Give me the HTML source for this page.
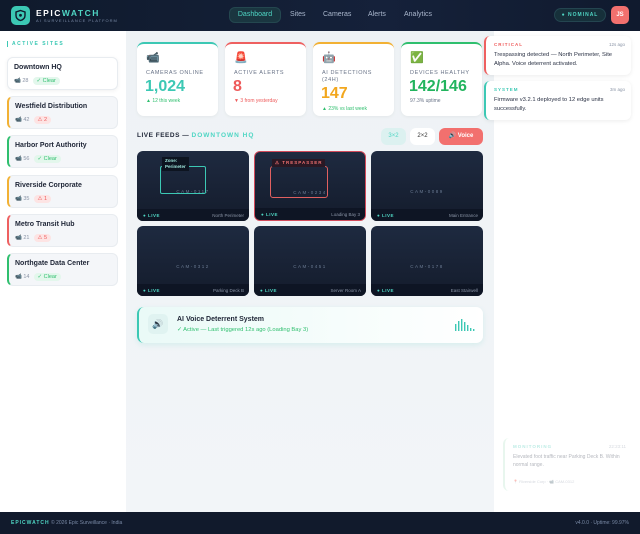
<!DOCTYPE html>
<html><head><meta charset="utf-8"><style>
*{box-sizing:border-box;margin:0;padding:0}
body{width:640px;height:534px;overflow:hidden;font-family:"Liberation Sans",sans-serif;background:#fff;position:relative;color:#1e2536}
.hdr{position:absolute;left:0;top:0;width:640px;height:31px;background:linear-gradient(90deg,#0f1a2c,#15213a 60%,#101a2e);}
.logo{position:absolute;left:11px;top:6px;width:19px;height:19px;border-radius:5px;background:#3cc8b4}
.brand{position:absolute;left:36px;top:8px;font-size:8.5px;font-weight:bold;letter-spacing:1.5px;color:#fff}
.brand b{color:#4fd6c4}
.sub{position:absolute;left:36px;top:18px;font-size:4px;letter-spacing:1px;color:#7a8aa6}
.nav{position:absolute;top:11px;font-size:7px;color:#a9b6cc}
.navact{position:absolute;left:229px;top:7px;width:52px;height:16px;border-radius:6px;background:#1a3640;border:1px solid #24474f;color:#4fd6c4;font-size:7px;text-align:center;line-height:14px}
.nom{position:absolute;left:554px;top:8px;width:52px;height:14px;border-radius:7px;background:#16303a;border:1px solid #244550;color:#4fd6c4;font-size:5px;font-weight:bold;letter-spacing:1px;line-height:12px;text-align:center}
.av{position:absolute;left:611px;top:6px;width:18px;height:18px;border-radius:5px;background:#f2706e;color:#fff;font-size:6px;font-weight:bold;text-align:center;line-height:18px}
.side{position:absolute;left:0;top:31px;width:126px;height:481px;background:#fff}
.main{position:absolute;left:126px;top:31px;width:368px;height:481px;background:linear-gradient(180deg,#eef2f5,#f2f5f8)}
.right{position:absolute;left:494px;top:31px;width:146px;height:481px;background:#fff}
.st{position:absolute;left:7px;top:41px;font-size:5px;font-weight:bold;letter-spacing:1.5px;color:#3cc8b4;border-left:1px solid #3cc8b4;padding-left:4px}
.sc{position:absolute;left:7px;width:111px;height:33px;border-radius:6px;background:#f4f6f9;border:1px solid #e8ecf0;border-left:2px solid}
.sc .n{position:absolute;left:6px;top:6px;font-size:7px;font-weight:bold;color:#1e2536}
.sc .m{position:absolute;left:6px;top:19px;font-size:5.5px;color:#8a94a6}
.pill{display:inline-block;margin-left:4px;padding:1px 4px;border-radius:5px;font-size:5.5px}
.g{background:#e3f7ec;color:#2fbf6e}.r{background:#fde4e4;color:#ee5a5a}
.card{position:absolute;top:42px;width:81px;height:74px;background:#fff;border-radius:7px;border-top:2px solid;box-shadow:0 1px 3px rgba(0,0,0,.05)}
.card .ic{position:absolute;left:9px;top:7px;font-size:11px}
.card .l{position:absolute;left:9px;top:26px;font-size:5.5px;letter-spacing:.6px;color:#6a7488;line-height:7px}
.card .v{position:absolute;left:8px;font-size:16px;font-weight:bold}
.card .d{position:absolute;left:9px;font-size:5px}
.cam{position:absolute;width:112px;height:70px;border-radius:6px;background:linear-gradient(180deg,#1e2a40,#141c2c);overflow:hidden}
.cam .bar{position:absolute;left:0;bottom:0;width:100%;height:12px;background:#0e1524}
.cam .lv{position:absolute;left:6px;bottom:3px;font-size:4.5px;font-weight:bold;color:#4fd6c4;letter-spacing:.5px}
.cam .loc{position:absolute;right:5px;bottom:3px;font-size:4.5px;color:#8a94a6}
.cam .id{position:absolute;left:0;width:100%;text-align:center;top:38px;font-size:4.5px;letter-spacing:1.5px;color:#6a7a92}
.btn{position:absolute;top:128px;height:17px;border-radius:6px;font-size:6px;text-align:center;line-height:17px}
.toast{position:absolute;left:484px;width:147px;background:#fff;border-radius:6px;border-left:2px solid;box-shadow:0 1px 4px rgba(0,0,0,.08)}
.toast .t{position:absolute;left:8px;top:6px;font-size:4.5px;font-weight:bold;letter-spacing:1px}
.toast .tm{position:absolute;right:6px;top:6px;font-size:4.5px;color:#8a94a6}
.toast .b{position:absolute;left:8px;top:15px;width:132px;font-size:5.8px;line-height:9px;color:#2a3144}
.ftr{position:absolute;left:0;top:512px;width:640px;height:22px;background:#111a2c;font-size:5px;color:#7a8aa6}
</style></head><body>
<div class="hdr">
<div class="logo"><svg width="19" height="19" viewBox="0 0 19 19"><path d="M9.5 4.5 L14 6 V9.5 C14 12 12 13.8 9.5 14.5 C7 13.8 5 12 5 9.5 V6 Z" fill="none" stroke="#0f1a2c" stroke-width="1.4"/><circle cx="9.5" cy="9.3" r="1.4" fill="#0f1a2c"/></svg></div>
<div class="brand">EPIC<b>WATCH</b></div>
<div class="sub">AI SURVEILLANCE PLATFORM</div>
<div class="navact">Dashboard</div>
<div class="nav" style="left:290px">Sites</div>
<div class="nav" style="left:323px">Cameras</div>
<div class="nav" style="left:368px">Alerts</div>
<div class="nav" style="left:404px">Analytics</div>
<div class="nom">● NOMINAL</div>
<div class="av">JS</div>
</div>
<div class="side"></div><div class="main"></div><div class="right"></div>
<div class="st">ACTIVE SITES</div>
<div class="sc" style="top:57px;background:#fff;border-left:1px solid #e8ecf0;box-shadow:0 1px 4px rgba(0,0,0,.06)"><div class="n">Downtown HQ</div><div class="m">📹 28<span class="pill g">✓ Clear</span></div></div>
<div class="sc" style="top:96px;border-left-color:#f2b134"><div class="n">Westfield Distribution</div><div class="m">📹 42<span class="pill r">⚠ 2</span></div></div>
<div class="sc" style="top:135px;border-left-color:#2fbf6e"><div class="n">Harbor Port Authority</div><div class="m">📹 56<span class="pill g">✓ Clear</span></div></div>
<div class="sc" style="top:175px;border-left-color:#f2b134"><div class="n">Riverside Corporate</div><div class="m">📹 35<span class="pill r">⚠ 1</span></div></div>
<div class="sc" style="top:214px;border-left-color:#ee6060"><div class="n">Metro Transit Hub</div><div class="m">📹 21<span class="pill r">⚠ 5</span></div></div>
<div class="sc" style="top:253px;border-left-color:#2fbf6e"><div class="n">Northgate Data Center</div><div class="m">📹 14<span class="pill g">✓ Clear</span></div></div>

<div class="card" style="left:137px;border-top-color:#3cc8b4"><div class="ic">📹</div><div class="l">CAMERAS ONLINE</div><div class="v" style="top:34px;color:#3cc8b4">1,024</div><div class="d" style="top:54px;color:#2fbf6e">▲ 12 this week</div></div>
<div class="card" style="left:225px;border-top-color:#ee6060"><div class="ic">🚨</div><div class="l">ACTIVE ALERTS</div><div class="v" style="top:34px;color:#ee5a5a">8</div><div class="d" style="top:54px;color:#ee5a5a">▼ 3 from yesterday</div></div>
<div class="card" style="left:313px;border-top-color:#f2b134"><div class="ic">🤖</div><div class="l">AI DETECTIONS<br>(24H)</div><div class="v" style="top:41px;color:#f2a71e">147</div><div class="d" style="top:62px;color:#2fbf6e">▲ 23% vs last week</div></div>
<div class="card" style="left:401px;border-top-color:#2fbf6e"><div class="ic">✅</div><div class="l">DEVICES HEALTHY</div><div class="v" style="top:34px;color:#22b45e">142/146</div><div class="d" style="top:54px;color:#6a7488">97.3% uptime</div></div>

<div style="position:absolute;left:137px;top:132px;font-size:6.5px;font-weight:bold;letter-spacing:.5px">LIVE FEEDS — <span style="color:#4fd6c4;letter-spacing:1px">DOWNTOWN HQ</span></div>
<div class="btn" style="left:381px;width:25px;background:#dcf1f0;color:#4fd6c4">3×2</div>
<div class="btn" style="left:410px;width:25px;background:#fff;color:#333">2×2</div>
<div class="btn" style="left:439px;width:44px;background:#f2706e;color:#fff;font-weight:bold">🔊 Voice</div>

<div class="cam" style="left:137px;top:151px"><div style="position:absolute;left:23px;top:15px;width:46px;height:28px;border:1px solid #3cc8b4;border-radius:2px"></div><div style="position:absolute;left:25px;top:6px;background:#0d1420;color:#9fe6dc;font-size:4.5px;font-weight:bold;padding:1px 3px;line-height:6px">Zone:<br>Perimeter</div><div class="id">CAM-0117</div><div class="bar"></div><div class="lv">● LIVE</div><div class="loc">North Perimeter</div></div>
<div class="cam" style="left:254px;top:151px;border:1px solid #d24a5a"><div style="position:absolute;left:15px;top:14px;width:58px;height:32px;border:1px solid #e06060;border-radius:3px"></div><div style="position:absolute;left:17px;top:7px;background:#2a1824;color:#f07070;font-size:4.5px;font-weight:bold;padding:1px 3px;letter-spacing:1px">⚠ TRESPASSER</div><div class="id">CAM-0234</div><div class="bar"></div><div class="lv">● LIVE</div><div class="loc">Loading Bay 3</div></div>
<div class="cam" style="left:371px;top:151px"><div class="id">CAM-0089</div><div class="bar"></div><div class="lv">● LIVE</div><div class="loc">Main Entrance</div></div>
<div class="cam" style="left:137px;top:226px"><div class="id">CAM-0312</div><div class="bar"></div><div class="lv">● LIVE</div><div class="loc">Parking Deck B</div></div>
<div class="cam" style="left:254px;top:226px"><div class="id">CAM-0451</div><div class="bar"></div><div class="lv">● LIVE</div><div class="loc">Server Room A</div></div>
<div class="cam" style="left:371px;top:226px"><div class="id">CAM-0178</div><div class="bar"></div><div class="lv">● LIVE</div><div class="loc">East Stairwell</div></div>

<div style="position:absolute;left:137px;top:307px;width:346px;height:36px;background:linear-gradient(90deg,#eafaf7,#fff);border-radius:7px;border-left:2px solid #3cc8b4;box-shadow:0 2px 6px rgba(60,200,180,.15)">
<div style="position:absolute;left:9px;top:7px;width:20px;height:20px;border-radius:5px;background:#e0f3f1;font-size:9px;text-align:center;line-height:20px">🔊</div>
<div style="position:absolute;left:38px;top:9px;font-size:7px;font-weight:bold">AI Voice Deterrent System</div>
<div style="position:absolute;left:38px;top:20px;font-size:5.8px;color:#2fbf6e">✓ Active — Last triggered 12s ago (Loading Bay 3)</div>
<svg style="position:absolute;left:316px;top:12px" width="20" height="12"><g fill="#3cc8b4"><rect x="0" y="5" width="1.4" height="7"/><rect x="3" y="2" width="1.4" height="10"/><rect x="6" y="0" width="1.4" height="12"/><rect x="9" y="3" width="1.4" height="9"/><rect x="12" y="6" width="1.4" height="6"/><rect x="15" y="9" width="1.4" height="3"/><rect x="18" y="10" width="1.4" height="2"/></g></svg>
</div>

<div class="toast" style="top:36px;height:39px;border-left-color:#ee6060"><div class="t" style="color:#ee5a5a">CRITICAL</div><div class="tm">12s ago</div><div class="b">Trespassing detected — North Perimeter, Site Alpha. Voice deterrent activated.</div></div>
<div class="toast" style="top:81px;height:39px;border-left-color:#3cc8b4"><div class="t" style="color:#3cc8b4">SYSTEM</div><div class="tm">3m ago</div><div class="b">Firmware v3.2.1 deployed to 12 edge units successfully.</div></div>
<div class="toast" style="left:503px;top:438px;width:129px;height:53px;border-left-color:#bfe8d0;opacity:.35;box-shadow:none"><div class="t" style="color:#3cc8b4">MONITORING</div><div class="tm">22:23:11</div><div class="b" style="width:115px;font-size:5px;line-height:8px">Elevated foot traffic near Parking Deck B. Within normal range.</div><div style="position:absolute;left:8px;top:41px;font-size:4px;color:#8a94a6">📍 Riverside Corp · 📹 CAM-0312</div></div>

<div class="ftr"><div style="position:absolute;left:11px;top:8px"><b style="color:#4fd6c4;letter-spacing:1px">EPICWATCH</b> © 2026 Epic Surveillance · India</div><div style="position:absolute;right:11px;top:8px">v4.0.0 · Uptime: 99.97%</div></div>
</body></html>
